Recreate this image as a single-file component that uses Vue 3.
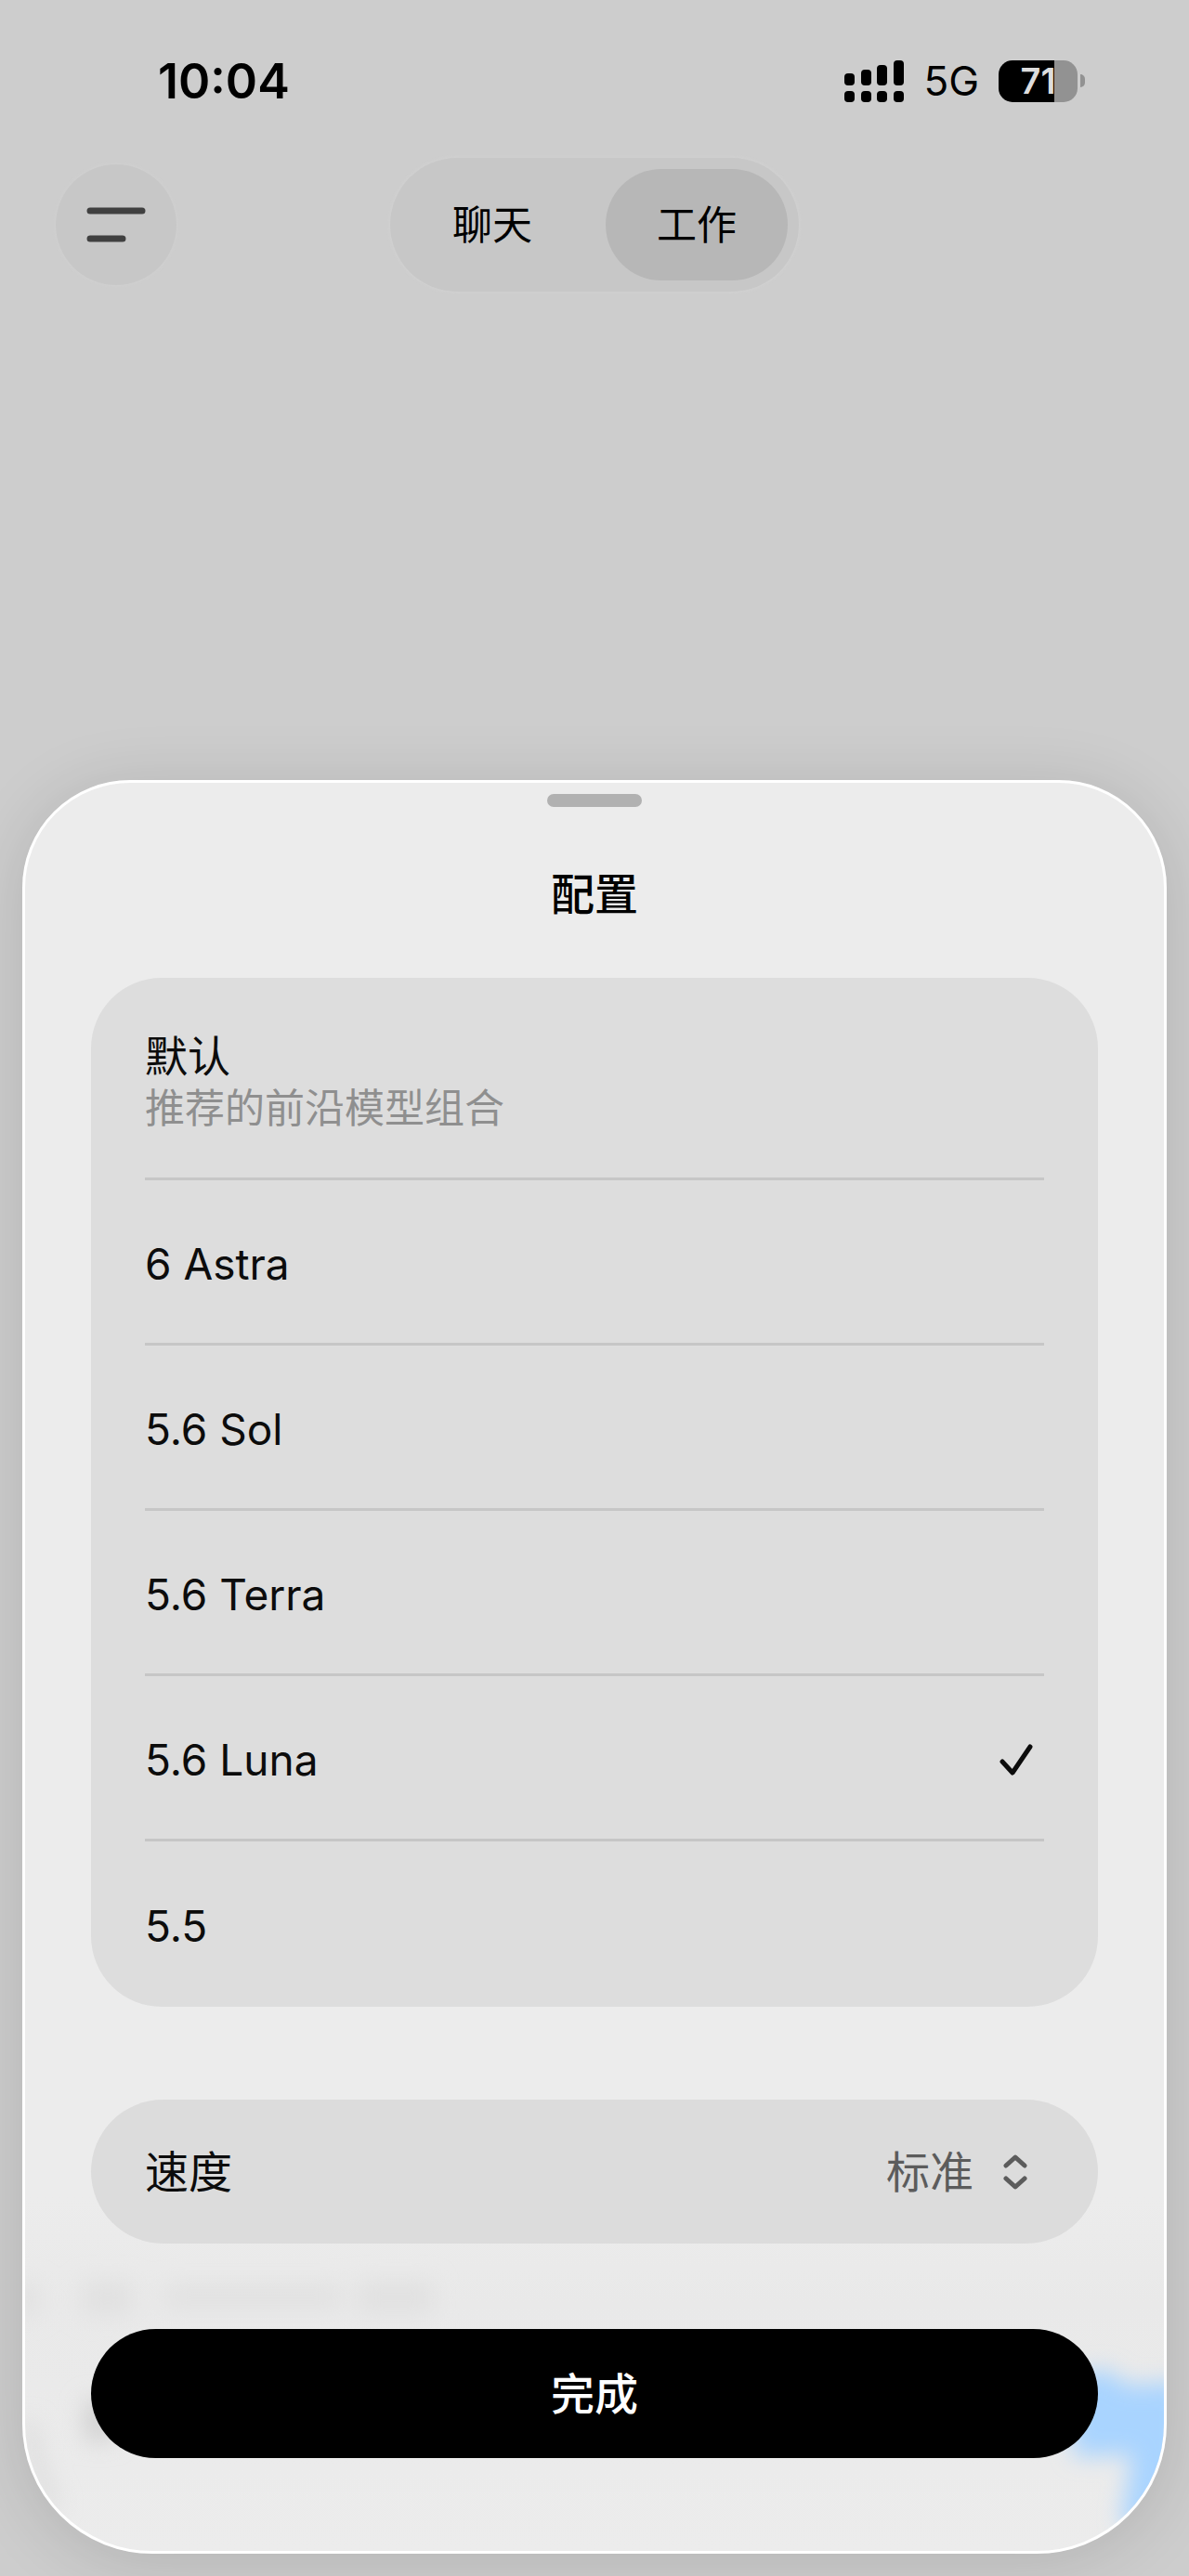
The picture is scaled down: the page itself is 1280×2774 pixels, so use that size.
<template>
  <div class="screen">
    <header class="status">
      <time class="status__time">10:04</time>
      <div class="status__icons">
        <svg class="status__signal" viewBox="0 0 64 45" aria-hidden="true">
          <rect x="0" y="14" width="11" height="13" rx="4" />
          <rect x="18" y="10" width="11" height="17" rx="4" />
          <rect x="35" y="5" width="11" height="22" rx="4" />
          <rect x="53" y="0" width="11" height="27" rx="4" />
          <rect v-for="x in [0, 18, 35, 53]" :key="x" :x="x" y="33" width="11" height="12" rx="4" />
        </svg>
        <span class="status__network">5G</span>
        <div class="battery">
          <span class="battery__body">71</span>
          <span class="battery__cap"></span>
        </div>
      </div>
    </header>

    <nav class="topbar">
      <button type="button" class="topbar__menu" aria-label="菜单">
        <svg viewBox="0 0 64 38" aria-hidden="true">
          <path d="M4 4H60M4 34H39" fill="none" stroke="currentColor" stroke-width="7" stroke-linecap="round" />
        </svg>
      </button>
      <div class="tabs">
        <button
          v-for="tab in tabs"
          :key="tab"
          type="button"
          class="tabs__item"
          :class="{ 'tabs__item--active': tab === activeTab }"
          @click="activeTab = tab"
        >{{ tab }}</button>
      </div>
    </nav>

    <section class="sheet">
      <!-- Contenido difuminado que se intuye detrás del panel -->
      <svg class="sheet__backdrop" viewBox="0 0 1226 330" aria-hidden="true">
        <defs>
          <filter id="soft" x="-20%" y="-50%" width="140%" height="200%">
            <feGaussianBlur stdDeviation="12" />
          </filter>
        </defs>
        <g filter="url(#soft)">
          <path d="M-10 42H14V76H-10zM62 40H116V76H62zM150 44H340V68H150zM358 40H440V74H358z" fill="#e1e1e1" />
          <path d="M64 168H96V212H64z" fill="#d2d2d2" />
          <path d="M4 190Q12 250 34 284" fill="none" stroke="#d6d6d6" stroke-width="10" />
          <path d="M1120 146L1162 134L1188 152L1250 148V345L1180 300L1192 226L1130 228z" fill="#a9d4ff" />
        </g>
      </svg>

      <span class="sheet__handle"></span>
      <h1 class="sheet__title">配置</h1>

      <div class="models" role="radiogroup" aria-label="配置">
        <label v-for="model in models" :key="model.name" class="model">
          <input v-model="selected" type="radio" name="model" :value="model.name" class="model__input" />
          <span class="model__text">
            <span class="model__name">{{ model.name }}</span>
            <span v-if="model.hint" class="model__hint">{{ model.hint }}</span>
          </span>
          <svg v-if="selected === model.name" class="model__check" viewBox="0 0 36 36" aria-hidden="true">
            <path d="M3 20L14 32L33 4" fill="none" stroke="currentColor" stroke-width="5" stroke-linecap="round" stroke-linejoin="round" />
          </svg>
        </label>
      </div>

      <div class="speed">
        <label for="speed" class="speed__label">速度</label>
        <div class="speed__control">
          <select id="speed" v-model="speed" class="speed__select">
            <option>标准</option>
            <option>快速</option>
          </select>
          <svg class="speed__arrows" viewBox="0 0 26 38" aria-hidden="true">
            <path d="M3 12L13 3L23 12M3 26L13 35L23 26" fill="none" stroke="currentColor" stroke-width="5" stroke-linecap="round" stroke-linejoin="round" />
          </svg>
        </div>
      </div>

      <button type="button" class="done">完成</button>
    </section>
  </div>
</template>

<script setup>
import { ref } from 'vue'

const tabs = ['聊天', '工作']
const activeTab = ref('工作')

const models = [
  { name: '默认', hint: '推荐的前沿模型组合' },
  { name: '6 Astra' },
  { name: '5.6 Sol' },
  { name: '5.6 Terra' },
  { name: '5.6 Luna' },
  { name: '5.5' }
]
const selected = ref('5.6 Luna')
const speed = ref('标准')
</script>

<style>
body { background: #cdcdcd; }
</style>

<style scoped>
.screen { min-height: 100vh; display: flex; flex-direction: column; overflow: hidden; background: #cdcdcd; color: #0c0c0c; font-family: Inter, "Noto Sans CJK SC", sans-serif; }
.screen * { box-sizing: border-box; }
button, select { margin: 0; padding: 0; border: 0; background: none; color: inherit; font: inherit; cursor: pointer; }
svg { display: block; flex: none; }

/* --- BARRA DE ESTADO --- */
.status { display: flex; justify-content: space-between; align-items: center; height: 170px; padding: 4px 112px 0 170px; color: #000000; }
.status__time { font-size: 52px; font-weight: 600; }
.status__icons { display: flex; align-items: center; gap: 21px; }
.status__signal { width: 64px; height: 45px; }
.status__network { font-size: 44px; }
.battery { display: flex; align-items: center; gap: 3px; }
.battery__body { width: 85px; height: 45px; border-radius: 15px; background: linear-gradient(90deg, #000000 60px, #929292 60px); color: #dddddd; font-size: 38px; font-weight: 600; line-height: 45px; text-align: center; }
.battery__cap { width: 5px; height: 14px; border-radius: 0 5px 5px 0; background: #929292; }

/* --- NAVEGACIÓN --- */
.topbar { display: grid; grid-template-columns: 1fr auto 1fr; align-items: center; padding: 0 60px; }
.topbar__menu { display: grid; place-items: center; width: 130px; height: 130px; border-radius: 50%; background: #c7c7c7; box-shadow: 0 0 4px #d2d2d2; color: #404040; }
.topbar__menu svg { width: 64px; height: 38px; }
.tabs { display: flex; gap: 24px; padding: 12px; border-radius: 72px; background: #c7c7c7; box-shadow: 0 0 4px #d4d4d4; }
.tabs__item { width: 196px; height: 120px; border-radius: 60px; color: #000000; font-size: 43px; line-height: 56px; }
.tabs__item--active { background: #b7b7b7; }

/* --- PANEL --- */
.sheet { position: relative; display: flex; flex-direction: column; margin: auto 24px 24px; padding: 12px 71px 100px; border: 3px solid #ffffff; border-radius: 116px 116px 140px 140px; background: linear-gradient(#ececec 80%, #e9e9e9 86%, #ececec); box-shadow: 0 8px 72px rgba(0, 0, 0, 0.13); overflow: hidden; }
.sheet > * { position: relative; }
.sheet .sheet__backdrop { position: absolute; left: 0; bottom: 0; width: 100%; }
.sheet__handle { align-self: center; width: 102px; height: 14px; border-radius: 7px; background: #b1b1b1; }
.sheet__title { margin: 60px 0 56px; color: #000000; font-size: 47px; font-weight: 500; line-height: 68px; text-align: center; }

/* --- LISTA DE MODELOS --- */
.models { padding: 0 58px; border-radius: 76px; background: #dddddd; }
.model { display: flex; justify-content: space-between; align-items: center; height: 178px; padding: 4px 12px 0 0; border-bottom: 3px solid #c6c6c6; cursor: pointer; }
.model:first-child { height: 218px; padding-top: 8px; }
.model:last-child { border-bottom: 0; }
.model__input { position: absolute; opacity: 0; }
.model__text { display: flex; flex-direction: column; }
.model__name { font-size: 46px; line-height: 56px; }
.model__hint { color: #8f8f8f; font-size: 43px; line-height: 56px; }
.model__check { width: 36px; height: 36px; }

/* --- VELOCIDAD --- */
.speed { display: flex; justify-content: space-between; align-items: center; height: 155px; margin-top: 100px; padding: 0 76px 0 58px; border-radius: 78px; background: #dcdcdc; font-size: 47px; line-height: 68px; }
.speed__control { display: flex; align-items: center; gap: 32px; color: #5c5c5c; }
.speed__select { appearance: none; }
.speed__arrows { width: 26px; height: 38px; }

.done { height: 139px; margin-top: 92px; border-radius: 70px; background: #000000; color: #ffffff; font-size: 47px; font-weight: 500; line-height: 68px; }
</style>
